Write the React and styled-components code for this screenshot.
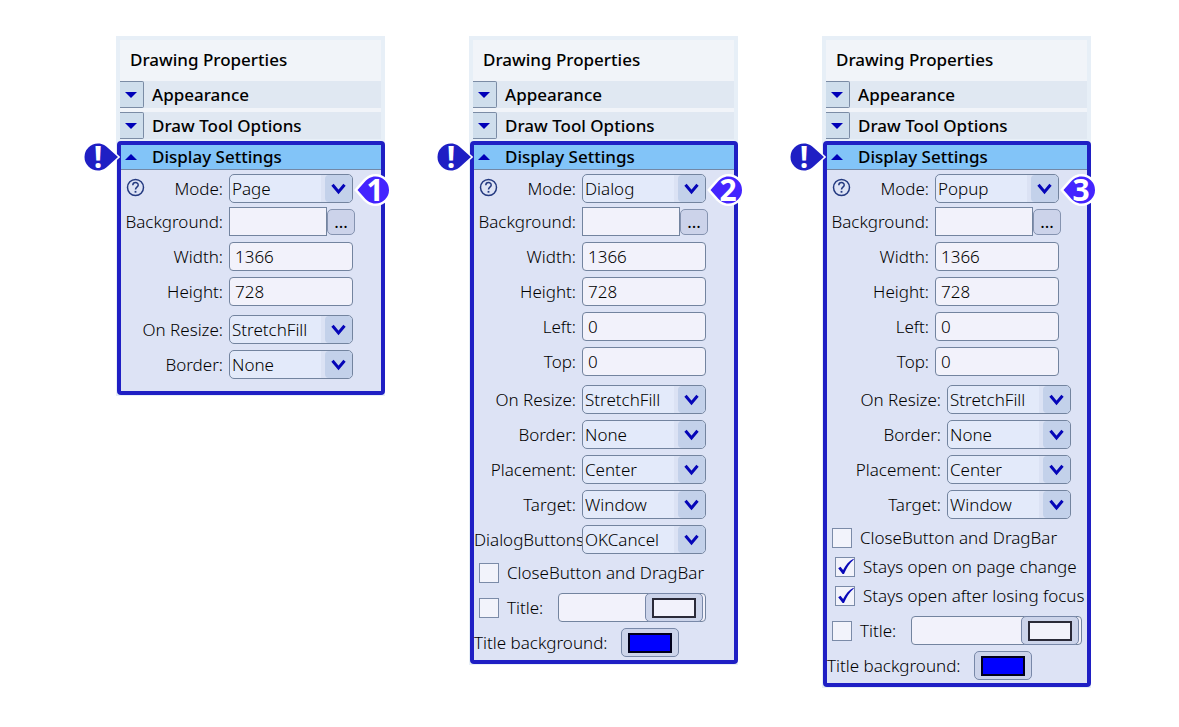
import React, { useId, useState } from 'react'
import styled, { createGlobalStyle } from 'styled-components'

const GlobalStyle = createGlobalStyle`
  *, *::before, *::after {
    box-sizing: border-box;
  }
  body {
    margin: 0;
    background: #ffffff;
    color: #000000;
    font-family: "Noto Sans", "Open Sans", sans-serif;
    font-size: 17px;
    font-weight: 300;
    line-height: 24px;
  }
  button, input, select {
    font: inherit;
    color: inherit;
    margin: 0;
    padding: 0;
  }
`

const Page = styled.main`
  display: grid;
  grid-template-columns: repeat(auto-fit, minmax(260px, 1fr));
  align-items: start;
  gap: 84px;
  padding: 36px 88px 36px 116px;
`

const Panel = styled.section`
  background: #e7eff7;
  padding-bottom: 1px;
`

const PanelTop = styled.div`
  padding: 4px 4px 2px;
`

const PanelTitle = styled.h2`
  margin: 0;
  padding: 8px 10px 9px;
  background: #f1f4f9;
  font-size: 17px;
  font-weight: 500;
  line-height: 24px;
`

const Sections = styled.div`
  display: flex;
  flex-direction: column;
  gap: 4px;
  background: #f1f4f9;
`

const SectionRow = styled.div`
  display: flex;
  align-items: center;
  gap: 8px;
  height: 27px;
  background: ${(p) => (p.$open ? '#82c4f8' : '#e0e8f2')};
`

const OpenRow = styled(SectionRow)`
  height: 25px;
  border-bottom: 1px solid #7388a6;
`

const Toggle = styled.button`
  display: flex;
  align-items: center;
  justify-content: center;
  width: ${(p) => (p.$flat ? '23px' : '24px')};
  height: 100%;
  padding-right: ${(p) => (p.$flat ? '3px' : '2px')};
  border: ${(p) => (p.$flat ? '0' : '1px solid #7b8ca5')};
  border-left: 0;
  border-radius: 0 2px 2px 0;
  background: ${(p) => (p.$flat ? 'transparent' : '#cfdeec')};
`

const SectionName = styled.h3`
  margin: 0;
  font-size: 17px;
  font-weight: 500;
  line-height: 24px;
`

const Highlight = styled.div`
  position: relative;
  margin-left: 1px;
  border: 4px solid #1f1fc4;
  border-radius: 4px;
  background: #dde3f5;
`

const Form = styled.form`
  display: flex;
  flex-direction: column;
  padding: 4px 0 ${(p) => (p.$roomy ? '12px' : '3px')};
`

const Group = styled.div`
  display: flex;
  flex-direction: column;
  gap: ${(p) => p.$gap}px;
  margin-top: ${(p) => p.$top || 0}px;
`

const Field = styled.div`
  position: relative;
  display: flex;
  align-items: center;
  height: 29px;
`

const LabelCell = styled.div`
  display: flex;
  flex: none;
  align-items: center;
  justify-content: ${(p) => (p.$tight ? 'flex-start' : 'flex-end')};
  width: ${(p) => (p.$wide ? '120px' : '108px')};
  padding-right: ${(p) => (p.$tight ? '0' : '6px')};
  white-space: nowrap;
`

const HelpButton = styled.button`
  display: flex;
  margin: 0 auto 3px 5px;
  border: 0;
  background: none;
`

const TextInput = styled.input`
  width: 124px;
  height: 29px;
  padding: 0 5px;
  border: 1px solid #73849f;
  border-radius: 4px;
  background: #f2f2fb;
`

const FlatInput = styled(TextInput)`
  width: 98px;
  border-radius: 0;
`

const MoreButton = styled.button`
  width: 28px;
  height: 26px;
  border: 1px solid #8593b0;
  border-radius: 5px;
  background: #ccd3ea;
  font-weight: 400;
  line-height: 24px;
`

const SelectBox = styled.div`
  display: grid;
  grid-template-columns: 1fr 27px;
  align-items: center;
  width: 124px;
  height: 29px;
  border: 1px solid #73849f;
  border-radius: 5px;
  background: linear-gradient(to right, #e3eafa 91px, #dbe2f4 91px);
  overflow: hidden;

  select {
    grid-area: 1 / 1 / 2 / 3;
    z-index: 1;
    height: 27px;
    padding: 0 0 0 2px;
    border: 0;
    background: transparent;
    appearance: none;
  }
`

const SelectArrow = styled.span`
  grid-area: 1 / 2;
  display: flex;
  align-items: center;
  justify-content: center;
  height: 27px;
  border-radius: 4px;
  background: #c3d1ea;
`

const CheckRow = styled.div`
  display: flex;
  align-items: center;
  gap: 8px;
  height: 29px;
  padding-left: ${(p) => (p.$indent ? '8px' : '5px')};
  white-space: nowrap;
`

const CheckBox = styled.span`
  display: grid;
  flex: none;
  width: 20px;
  height: 20px;

  input, svg {
    grid-area: 1 / 1;
  }
  input {
    width: 20px;
    height: 20px;
    border: 1px solid #7b8ba8;
    background: #f2f3fb;
    appearance: none;
  }
  svg {
    visibility: hidden;
    pointer-events: none;
  }
  input:checked + svg {
    visibility: visible;
  }
`

const TitleCheck = styled(CheckRow)`
  flex: none;
  width: 84px;
`

const TitleField = styled.div`
  position: relative;
  flex: 1;
  margin-right: ${(p) => (p.$wide ? '5px' : '28px')};

  input {
    display: block;
    width: 100%;
  }
  button {
    position: absolute;
    top: 0;
    right: 3px;
  }
`

const ColorButton = styled.button`
  display: flex;
  align-items: center;
  justify-content: center;
  width: 58px;
  height: 29px;
  border: 1px solid #7888a8;
  border-radius: 5px;
  background: #ccd4ea;
`

const Swatch = styled.span`
  width: 44px;
  height: 20px;
  border: 2px solid ${(p) => (p.$color === '#0000ff' ? '#00001a' : '#2a2a38')};
  background: ${(p) => p.$color};
`

const TitleBackground = styled.span`
  width: 147px;
  white-space: nowrap;
`

const Alert = styled.span`
  position: absolute;
  top: -4px;
  left: -39px;
  z-index: 2;
  width: 38px;
  height: 32px;
`

const Step = styled.span`
  position: absolute;
  top: -2px;
  left: 233px;
  z-index: 2;
  width: 38px;
  height: 36px;
`

const MarkerText = styled.span`
  position: absolute;
  top: 0;
  left: ${(p) => p.$left}px;
  width: 28px;
  color: #ffffff;
  font-family: "Open Sans", sans-serif;
  font-size: 30px;
  font-weight: 700;
  line-height: ${(p) => p.$line}px;
  text-align: center;
`

const Triangle = ({ up }) => (
  <svg width="12" height="6" viewBox="0 0 12 6">
    <path d={up ? 'M0 6L6 0l6 6z' : 'M0 0h12L6 6z'} fill="#0000b8" />
  </svg>
)

const Chevron = () => (
  <svg width="15" height="12" viewBox="0 0 15 12">
    <path d="M1.5 1.8L7.5 9l6-7.2" fill="none" stroke="#0606b8" strokeWidth="3" />
  </svg>
)

const Tick = () => (
  <svg width="20" height="20" viewBox="0 0 20 20">
    <path d="M3.2 11.2l2.3-1.5 2.6 3.4C10.6 8 14 4 18.5 1.8l.3.8C14.5 6.5 11.3 11.5 9 17H7.6z" fill="#0808b8" />
  </svg>
)

const HelpIcon = () => (
  <svg width="19" height="19" viewBox="0 0 19 19" fill="none" stroke="#243a80" strokeWidth="1.5">
    <circle cx="9.5" cy="9.5" r="8" />
    <path d="M6.8 7.3c0-3.7 5.6-3.5 5.4-.2-.1 2-2.7 2.1-2.7 4.4" />
    <path d="M9.5 12.9v1.8" strokeWidth="1.8" />
  </svg>
)

const AlertMarker = () => (
  <Alert>
    <svg width="38" height="32" viewBox="0 0 38 32">
      <path d="M16 2.5a13.5 13.5 0 1 0 0 27c5 0 8-2.5 10-4.5L36 16 26 7c-2-2-5-4.5-10-4.5z" fill="#1f1fc4" stroke="#ffffff" strokeWidth="3" paintOrder="stroke" />
    </svg>
    <MarkerText $left={2} $line={31}>!</MarkerText>
  </Alert>
)

const StepMarker = ({ number }) => (
  <Step>
    <svg width="38" height="36" viewBox="0 0 38 36">
      <path d="M21.5 4.5a13.5 13.5 0 1 1 0 27c-5 0-8-2.5-10-4.5L3.5 18l8-9c2-2 5-4.5 10-4.5z" fill="#4424ff" stroke="#ffffff" strokeWidth="5" paintOrder="stroke" />
    </svg>
    <MarkerText $left={7} $line={36}>{number}</MarkerText>
  </Step>
)

const SelectField = ({ label, value, options = [], wide, tight, help, children }) => {
  const id = useId()
  const [current, setCurrent] = useState(value)
  const all = [value, ...options.filter((o) => o !== value)]
  return (
    <Field>
      <LabelCell $wide={wide} $tight={tight}>
        {help && <HelpButton type="button" aria-label="Help"><HelpIcon /></HelpButton>}
        <label htmlFor={id}>{label}</label>
      </LabelCell>
      <SelectBox>
        <select id={id} value={current} onChange={(e) => setCurrent(e.target.value)}>
          {all.map((o) => <option key={o}>{o}</option>)}
        </select>
        <SelectArrow><Chevron /></SelectArrow>
      </SelectBox>
      {children}
    </Field>
  )
}

const NumberField = ({ label, value }) => {
  const id = useId()
  return (
    <Field>
      <LabelCell><label htmlFor={id}>{label}</label></LabelCell>
      <TextInput id={id} type="text" inputMode="numeric" defaultValue={value} />
    </Field>
  )
}

const Check = ({ label, checked, indent, as: Row = CheckRow }) => {
  const id = useId()
  return (
    <Row $indent={indent}>
      <CheckBox>
        <input id={id} type="checkbox" defaultChecked={checked} />
        <Tick />
      </CheckBox>
      <label htmlFor={id}>{label}</label>
    </Row>
  )
}

const TitleRows = ({ wide }) => (
  <Group $gap={6} $top={6}>
    <Field>
      <Check label="Title:" as={TitleCheck} />
      <TitleField $wide={wide}>
        <TextInput type="text" aria-label="Title text" />
        <ColorButton type="button" aria-label="Title color"><Swatch $color="#f2f2fb" /></ColorButton>
      </TitleField>
    </Field>
    <Field>
      <TitleBackground>Title background:</TitleBackground>
      <ColorButton type="button" aria-label="Title background color"><Swatch $color="#0000ff" /></ColorButton>
    </Field>
  </Group>
)

const modes = ['Page', 'Dialog', 'Popup']

const panels = [
  {
    mode: 'Page',
    sizes: [['Width:', '1366'], ['Height:', '728']],
    selects: [['On Resize:', 'StretchFill'], ['Border:', 'None']],
  },
  {
    mode: 'Dialog',
    sizes: [['Width:', '1366'], ['Height:', '728'], ['Left:', '0'], ['Top:', '0']],
    selects: [
      ['On Resize:', 'StretchFill'],
      ['Border:', 'None'],
      ['Placement:', 'Center'],
      ['Target:', 'Window'],
      ['DialogButtons', 'OKCancel'],
    ],
    checks: [{ label: 'CloseButton and DragBar' }],
  },
  {
    mode: 'Popup',
    wide: true,
    sizes: [['Width:', '1366'], ['Height:', '728'], ['Left:', '0'], ['Top:', '0']],
    selects: [
      ['On Resize:', 'StretchFill'],
      ['Border:', 'None'],
      ['Placement:', 'Center'],
      ['Target:', 'Window'],
    ],
    checks: [
      { label: 'CloseButton and DragBar' },
      { label: 'Stays open on page change', checked: true, indent: true },
      { label: 'Stays open after losing focus', checked: true, indent: true },
    ],
  },
]

const PropertiesPanel = ({ panel, number }) => {
  const backgroundId = useId()
  return (
    <Panel>
      <PanelTop>
        <PanelTitle>Drawing Properties</PanelTitle>
        <Sections>
          {['Appearance', 'Draw Tool Options'].map((name) => (
            <SectionRow key={name}>
              <Toggle type="button" aria-label={name}><Triangle /></Toggle>
              <SectionName>{name}</SectionName>
            </SectionRow>
          ))}
        </Sections>
      </PanelTop>
      <Highlight>
        <AlertMarker />
        <OpenRow $open>
          <Toggle type="button" $flat aria-label="Display Settings"><Triangle up /></Toggle>
          <SectionName>Display Settings</SectionName>
        </OpenRow>
        <Form $roomy={!panel.checks}>
          <Group $gap={4}>
            <SelectField label="Mode:" value={panel.mode} options={modes} help>
              <StepMarker number={number} />
            </SelectField>
            <Field>
              <LabelCell><label htmlFor={backgroundId}>Background:</label></LabelCell>
              <FlatInput id={backgroundId} type="text" />
              <MoreButton type="button">...</MoreButton>
            </Field>
          </Group>
          <Group $gap={6} $top={6}>
            {panel.sizes.map(([label, value]) => (
              <NumberField key={label} label={label} value={value} />
            ))}
          </Group>
          <Group $gap={6} $top={9}>
            {panel.selects.map(([label, value]) => (
              <SelectField key={label} label={label} value={value} wide={panel.wide} tight={label === 'DialogButtons'} />
            ))}
          </Group>
          {panel.checks && (
            <>
              <Group $gap={0} $top={4}>
                {panel.checks.map((check) => <Check key={check.label} {...check} />)}
              </Group>
              <TitleRows wide={panel.wide} />
            </>
          )}
        </Form>
      </Highlight>
    </Panel>
  )
}

const App = () => (
  <>
    <GlobalStyle />
    <Page>
      {panels.map((panel, idx) => (
        <PropertiesPanel key={panel.mode} panel={panel} number={idx + 1} />
      ))}
    </Page>
  </>
)

export default App
